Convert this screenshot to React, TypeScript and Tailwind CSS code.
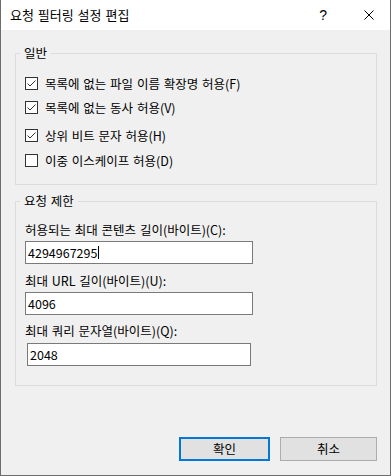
import React from 'react'

const font = { fontFamily: '"Noto Sans CJK KR", "Noto Sans", sans-serif', wordSpacing: '1px' }

const Check = ({ checked, label, className }: { checked: boolean; label: string; className: string }) => (
  <div className={`flex h-[17px] items-center ${className}`}>
    <div className="flex h-[13px] w-[13px] shrink-0 items-center justify-center border border-[#333333] bg-white">
      {checked && (
        <svg width="11" height="11" viewBox="0 0 11 11">
          <polyline points="1.5,5.5 4,8 9.5,2.5" fill="none" stroke="#333333" strokeWidth="1" />
        </svg>
      )}
    </div>
    <span className="ml-[7px] text-[12.5px] leading-[16px] text-black">{label}</span>
  </div>
)

const TextBox = ({ value, caret, className }: { value: string; caret?: boolean; className: string }) => (
  <div className={`flex h-[23px] items-center border border-[#7a7a7a] bg-white pl-[2px] text-[12.5px] leading-[16px] text-black ${className}`}>
    <span>{value}</span>
    {caret && <span className="ml-[1px] inline-block h-[13px] w-[1px] bg-black" />}
  </div>
)

export default function App() {
  return (
    <div className="h-[476px] w-[392px] bg-white" style={font}>
      <div className="flex h-[476px] w-[391px] flex-col border-x border-b border-[#6d6d6d]">
        {/* title bar */}
        <div className="flex h-[30px] shrink-0 items-center justify-between bg-white pl-[9px] pr-[16px]">
          <span className="text-[13px] leading-[18px] text-black">요청 필터링 설정 편집</span>
          <div className="flex items-center">
            <span className="text-[14px] leading-[18px] text-black" style={{ fontFamily: '"Liberation Sans", sans-serif' }}>?</span>
            <svg className="ml-[37px]" width="10" height="10" viewBox="0 0 10 10">
              <path d="M0.5 0.5 L9.5 9.5 M9.5 0.5 L0.5 9.5" stroke="#000" strokeWidth="1" />
            </svg>
          </div>
        </div>

        {/* body */}
        <div className="flex flex-1 flex-col bg-[#f0f0f0] pl-[14px] pr-[13px]">
          <fieldset className="mt-[15px] border border-[#dcdcdc]">
            <legend className="ml-[4px] px-[4px] text-[12.5px] leading-[16px] text-black">일반</legend>
            <div className="pb-[15px] pl-[9px]">
              <Check checked label="목록에 없는 파일 이름 확장명 허용(F)" className="mt-[14px]" />
              <Check checked label="목록에 없는 동사 허용(V)" className="mt-[7px]" />
              <Check checked label="상위 비트 문자 허용(H)" className="mt-[11px]" />
              <Check checked={false} label="이중 이스케이프 허용(D)" className="mt-[8px]" />
            </div>
          </fieldset>

          <fieldset className="mt-[8px] border border-[#dcdcdc]">
            <legend className="ml-[4px] px-[4px] text-[12.5px] leading-[16px] text-black">요청 제한</legend>
            <div className="pb-[19px] pl-[9px]">
              <div className="mt-[13px] text-[12.5px] leading-[16px] text-black">허용되는 최대 콘텐츠 길이(바이트)(C):</div>
              <TextBox value="4294967295" caret className="mt-[3px] w-[228px]" />
              <div className="mt-[9px] text-[12.5px] leading-[16px] text-black">최대 URL 길이(바이트)(U):</div>
              <TextBox value="4096" className="mt-[3px] w-[228px]" />
              <div className="mt-[8px] text-[12.5px] leading-[16px] text-black">최대 쿼리 문자열(바이트)(Q):</div>
              <TextBox value="2048" className="ml-[2px] mt-[4px] w-[224px]" />
            </div>
          </fieldset>

          <div className="mt-[51px] flex justify-end gap-[10px]">
            <button className="h-[24px] w-[91px] border-2 border-[#0078d7] bg-[#e1e1e1] text-[12.5px] leading-[16px] text-black">확인</button>
            <button className="h-[24px] w-[97px] border border-[#adadad] bg-[#e1e1e1] text-[12.5px] leading-[16px] text-black">취소</button>
          </div>
        </div>
      </div>
    </div>
  )
}
